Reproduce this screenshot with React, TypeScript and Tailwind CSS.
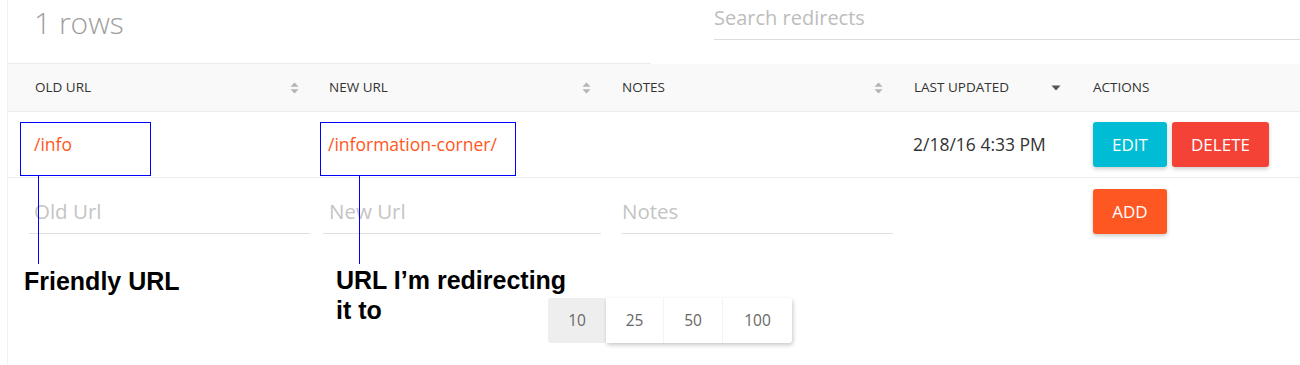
const ui = { fontFamily: '"Open Sans", "Noto Sans", sans-serif' };
const note = { fontFamily: '"Liberation Sans", Arial, sans-serif' };

function SortIcon() {
  return (
    <svg width="9" height="12" viewBox="0 0 9 12" className="fill-[#b3b3b3]">
      <path d="M4.5 0.5 L8.5 4.8 L0.5 4.8 Z" />
      <path d="M4.5 11.5 L8.5 7.2 L0.5 7.2 Z" />
    </svg>
  );
}

function Caret() {
  return (
    <svg width="10" height="6" viewBox="0 0 10 6" className="fill-[#555]">
      <path d="M0.5 0.5 L9.5 0.5 L5 5.5 Z" />
    </svg>
  );
}

function Head({ label, icon, pl = "pl-[14px]", pr = "pr-[16px]" }: { label: string; icon?: "sort" | "caret"; pl?: string; pr?: string }) {
  return (
    <div className={`flex items-center justify-between ${pl} ${pr}`}>
      <span className="text-[13.5px] uppercase text-[#333]">{label}</span>
      {icon === "sort" && <SortIcon />}
      {icon === "caret" && <Caret />}
    </div>
  );
}

function Field({ placeholder, className }: { placeholder: string; className: string }) {
  return (
    <div className={`mt-[12px] flex h-[44px] items-center border-b border-[#e0e0e0] ${className}`}>
      <span className="text-[20.5px] text-[#c4c4c4]">{placeholder}</span>
    </div>
  );
}

export default function App() {
  return (
    <div className="relative h-[365px] w-[1300px] overflow-hidden bg-white" style={ui}>
      <div className="ml-[7px] h-full border-l border-[#f0f0f0]">
        {/* top bar */}
        <div className="flex h-[64px]">
          <div className="w-[643px] border-b border-[#ebebeb] pl-[26px] pt-[3px]">
            <span className="text-[30px] font-light leading-[40px] text-[#9e9e9e]">1 rows</span>
          </div>
          <div className="ml-[63px] flex h-[40px] flex-1 items-center border-b border-[#dcdcdc]">
            <span className="-mt-[4px] text-[20px] text-[#bdbdbd]">Search redirects</span>
          </div>
        </div>

        {/* header */}
        <div className="grid h-[48px] grid-cols-[307px_293px_292px_179px_1fr] border-b border-[#ececec] bg-[#f9f9f9]">
          <Head label="Old Url" icon="sort" pl="pl-[27px]" />
          <Head label="New Url" icon="sort" pr="pr-[17px]" />
          <Head label="Notes" icon="sort" pr="pr-[17px]" />
          <Head label="Last Updated" icon="caret" pr="pr-[18px]" />
          <Head label="Actions" />
        </div>

        {/* data row */}
        <div className="grid h-[66px] grid-cols-[307px_293px_292px_179px_1fr] items-center border-b border-[#ececec] text-[17.5px]">
          <div className="pl-[26px] text-[#ff5722]">/info</div>
          <div className="pl-[13px] text-[#ff5722]">/information-corner/</div>
          <div />
          <div className="pl-[13px] text-[#333]">2/18/16 4:33 PM</div>
          <div className="flex gap-[5px] pl-[14px]">
            <button className="h-[45px] w-[74px] rounded-[3px] bg-[#00bcd4] text-[17px] text-white shadow-[0_2px_4px_rgba(0,0,0,0.2)]">EDIT</button>
            <button className="h-[45px] w-[97px] rounded-[3px] bg-[#f44336] text-[17px] text-white shadow-[0_2px_4px_rgba(0,0,0,0.2)]">DELETE</button>
          </div>
        </div>

        {/* add row */}
        <div className="grid grid-cols-[307px_293px_292px_179px_1fr] items-start">
          <Field placeholder="Old Url" className="ml-[21px] mr-[5px] pl-[5px]" />
          <Field placeholder="New Url" className="ml-[8px] mr-[7px] pl-[6px]" />
          <Field placeholder="Notes" className="ml-[14px] mr-[7px] pl-0" />
          <div />
          <div className="pl-[14px] pt-[11px]">
            <button className="h-[45px] w-[74px] rounded-[3px] bg-[#ff5722] text-[17px] text-white shadow-[0_2px_4px_rgba(0,0,0,0.2)]">ADD</button>
          </div>
        </div>

        {/* page size */}
        <div className="mt-[64px] ml-[540px] flex h-[45px] w-[244px] text-[15.5px] text-[#666]">
          <div className="flex w-[58px] items-center justify-center rounded-l-[3px] bg-[#eeeeee]">10</div>
          <div className="flex flex-1 rounded-r-[3px] bg-white shadow-[1px_2px_4px_rgba(0,0,0,0.22)]">
            <div className="flex w-[58px] items-center justify-center border-r border-[#f3f3f3]">25</div>
            <div className="flex w-[59px] items-center justify-center border-r border-[#f3f3f3]">50</div>
            <div className="flex flex-1 items-center justify-center">100</div>
          </div>
        </div>
      </div>

      {/* annotations drawn over the screenshot */}
      <div className="absolute left-[20px] top-[122px] h-[54px] w-[131px] border border-[#0000ff]" />
      <div className="absolute left-[38px] top-[175px] h-[89px] w-px bg-[#0000ff]" />
      <div className="absolute left-[24px] top-[267px] text-[25px] font-bold leading-[29px] text-black" style={note}>
        Friendly URL
      </div>

      <div className="absolute left-[320px] top-[122px] h-[54px] w-[196px] border border-[#0000ff]" />
      <div className="absolute left-[359px] top-[175px] h-[89px] w-px bg-[#0000ff]" />
      <div className="absolute left-[336px] top-[265px] w-[250px] text-[25px] font-bold leading-[30px] text-black" style={note}>
        URL I’m redirecting it to
      </div>
    </div>
  );
}
